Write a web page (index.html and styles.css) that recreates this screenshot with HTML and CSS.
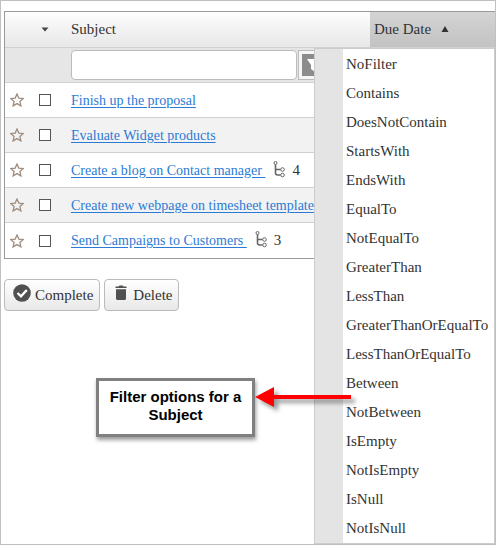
FILE: index.html
```html
<!DOCTYPE html>
<html lang="en">
<head>
    <meta charset="UTF-8">
    <meta name="viewport" content="width=device-width, initial-scale=1.0">
    <title>Tasks</title>
    <link rel="stylesheet" href="styles.css">
</head>
<body>
    <svg class="symbols" aria-hidden="true">
        <symbol id="star" viewBox="0 0 14 14">
            <path d="M7 1 L8.8 5.1 L13.2 5.500 L9.900 8.500 L10.900 12.900 L7 10.600 L3.100 12.900 L4.100 8.500 L0.800 5.500 L5.200 5.100 Z" fill="none" stroke="#a08e80" stroke-width="1.3"/>
        </symbol>
        <symbol id="tree" viewBox="0 0 12 17">
            <g fill="none" stroke="#666" stroke-width="1">
                <path d="M2.500 3.500 V12 Q2.500 14 4.500 14 H7.500 M2.500 8.500 H7.500" stroke-width="1.6"/>
                <circle cx="2.500" cy="2" r="1.500"/>
                <circle cx="9.500" cy="8.500" r="1.800"/>
                <circle cx="9.500" cy="14" r="1.800"/>
            </g>
        </symbol>
    </svg>
    <div class="page">
        <table class="grid">
            <colgroup>
                <col class="col-star">
                <col class="col-check">
                <col>
                <col class="col-due">
            </colgroup>
            <thead>
                <tr class="head">
                    <th></th>
                    <th class="center"><svg class="arrow" viewBox="0 0 8 8"><path d="M0.500 0.500 H7.500 L4 4.500 Z" fill="#444"/></svg></th>
                    <th>Subject</th>
                    <th class="due">Due Date <svg class="sort" viewBox="0 0 8 8"><path d="M4 0 L7.500 6 H0.500 Z" fill="#333"/></svg></th>
                </tr>
                <tr class="filter">
                    <td></td>
                    <td></td>
                    <td>
                        <div class="filter-box">
                            <input type="text" class="filter-input" aria-label="Filter Subject">
                            <button type="button" class="filter-btn" aria-label="Filter options">
                                <svg viewBox="0 0 22 22"><rect width="22" height="22" fill="#8c8c8c"/><path d="M5 5 H17 L13 11 V18 L9 15 V11 Z" fill="#fff"/></svg>
                            </button>
                        </div>
                    </td>
                    <td></td>
                </tr>
            </thead>
            <tbody>
                <tr>
                    <td class="center"><svg class="star"><use href="#star"/></svg></td>
                    <td class="center"><input type="checkbox" aria-label="Select Finish up the proposal"></td>
                    <td><a href="#">Finish up the proposal</a></td>
                    <td></td>
                </tr>
                <tr>
                    <td class="center"><svg class="star"><use href="#star"/></svg></td>
                    <td class="center"><input type="checkbox" aria-label="Select Evaluate Widget products"></td>
                    <td><a href="#">Evaluate Widget products</a></td>
                    <td></td>
                </tr>
                <tr>
                    <td class="center"><svg class="star"><use href="#star"/></svg></td>
                    <td class="center"><input type="checkbox" aria-label="Select Create a blog on Contact manager"></td>
                    <td><a href="#">Create a blog on Contact manager&nbsp;</a><svg class="tree"><use href="#tree"/></svg><span class="count">4</span></td>
                    <td></td>
                </tr>
                <tr>
                    <td class="center"><svg class="star"><use href="#star"/></svg></td>
                    <td class="center"><input type="checkbox" aria-label="Select Create new webpage on timesheet template"></td>
                    <td><a href="#">Create new webpage on timesheet template</a></td>
                    <td></td>
                </tr>
                <tr>
                    <td class="center"><svg class="star"><use href="#star"/></svg></td>
                    <td class="center"><input type="checkbox" aria-label="Select Send Campaigns to Customers"></td>
                    <td><a href="#">Send Campaigns to Customers&nbsp;</a><svg class="tree"><use href="#tree"/></svg><span class="count">3</span></td>
                    <td></td>
                </tr>
            </tbody>
        </table>

        <div class="actions">
            <button type="button" class="btn">
                <svg class="icon-check" viewBox="0 0 18 18"><circle cx="9" cy="9" r="8.800" fill="#505050"/><path d="M4.500 9 L8 12.300 L13.800 6" fill="none" stroke="#fff" stroke-width="2.400"/></svg>
                <span>Complete</span>
            </button>
            <button type="button" class="btn btn-delete">
                <svg class="icon-trash" viewBox="0 0 12 16"><path d="M0.500 1.500 H3.500 L4.500 0.500 H7.500 L8.500 1.500 H11.500 V3 H0.500 Z M1 4.300 H11 V13.500 Q11 15 9.500 15 H2.500 Q1 15 1 13.500 Z" fill="#505050"/></svg>
                <span>Delete</span>
            </button>
        </div>

        <ul class="menu">
            <li>NoFilter</li>
            <li>Contains</li>
            <li>DoesNotContain</li>
            <li>StartsWith</li>
            <li>EndsWith</li>
            <li>EqualTo</li>
            <li>NotEqualTo</li>
            <li>GreaterThan</li>
            <li>LessThan</li>
            <li>GreaterThanOrEqualTo</li>
            <li>LessThanOrEqualTo</li>
            <li>Between</li>
            <li>NotBetween</li>
            <li>IsEmpty</li>
            <li>NotIsEmpty</li>
            <li>IsNull</li>
            <li>NotIsNull</li>
        </ul>

        <div class="callout">
            <p class="callout-text">Filter options for a Subject</p>
            <svg class="callout-arrow" viewBox="0 0 96 20"><path d="M0 10 L19 0 V8 H96 V12 H19 V20 Z" fill="#f00"/></svg>
        </div>
    </div>
</body>
</html>
```

FILE: styles.css
```css
* {
    box-sizing: border-box;
}
body {
    margin: 0;
    font-family: "Liberation Serif", "Times New Roman", serif;
    font-size: 15px;
    color: #333;
    background-color: #fff;
}
.symbols {
    display: none;
}
.page {
    position: relative;
    min-height: 100vh;
    padding: 10px 0 0 3px;
    border: 1px solid #c0c0c0;
    overflow: hidden;
}

/* task grid */
.grid {
    width: 100%;
    table-layout: fixed;
    border-collapse: separate;
    border-spacing: 0;
    border: 1px solid #999;
    border-right: none;
}
.col-star {
    width: 23px;
}
.col-check {
    width: 34px;
}
.col-due {
    width: 125px;
}
.grid th,
.grid td {
    height: 35px;
    padding: 0 0 0 9px;
    text-align: left;
    font-weight: normal;
    white-space: nowrap;
    border-bottom: 1px solid #d0d0d0;
}
.grid th {
    height: 36px;
}
.grid .center {
    padding: 0;
    text-align: center;
}
.grid tbody tr:nth-child(even) {
    background-color: #f2f2f2;
}
.grid tbody tr:last-child td {
    border-bottom: none;
}
.head {
    background: linear-gradient(#fdfdfd, #e7e7e7);
}
.grid .due {
    padding-left: 4px;
    background: linear-gradient(#d4d4d4, #c2c2c2);
}
.filter {
    background-color: #e6e6e6;
}
.filter-box {
    display: flex;
    gap: 1px;
    padding-right: 42px;
}
.filter-input {
    flex: 1;
    min-width: 0;
    height: 30px;
    border: 1px solid #bbb;
    border-radius: 4px;
    font: inherit;
}
.filter-btn {
    width: 30px;
    height: 30px;
    padding: 3px;
    border: 1px solid #bbb;
    background-color: #f6f6f6;
}
.filter-btn svg {
    display: block;
    width: 22px;
    height: 22px;
}
.grid a {
    font-size: 14px;
    color: #2a7bd6;
    text-underline-offset: 2px;
}
.grid input[type="checkbox"] {
    appearance: none;
    display: block;
    width: 12px;
    height: 12px;
    margin: 0 auto;
    border: 1px solid #555;
    background-color: #fff;
}
.grid input[type="checkbox"]:checked {
    background-color: #555;
}
.arrow {
    width: 8px;
    height: 8px;
    vertical-align: middle;
}
.sort {
    width: 8px;
    height: 8px;
    margin-left: 6px;
}
.star {
    display: block;
    width: 14px;
    height: 14px;
    margin: 0 auto;
}
.tree {
    width: 12px;
    height: 17px;
    margin: -4px 7px 0 8px;
    vertical-align: middle;
}

/* buttons under the grid */
.actions {
    display: flex;
    gap: 4px;
    margin-top: 20px;
}
.btn {
    display: flex;
    align-items: center;
    gap: 4px;
    height: 32px;
    padding: 0 6px 0 8px;
    border: 1px solid #bbb;
    border-radius: 4px;
    background: linear-gradient(#fff, #e8e8e8);
    font: inherit;
    color: #333;
}
.btn svg {
    margin-bottom: 4px;
}
.btn-delete {
    gap: 6px;
    padding-left: 10px;
}
.icon-check {
    width: 18px;
    height: 18px;
}
.icon-trash {
    width: 12px;
    height: 16px;
}

/* filter menu */
.menu {
    position: absolute;
    top: 47px;
    right: 0;
    width: 181px;
    margin: 0;
    padding: 1px 0 0;
    list-style: none;
    border: 1px solid #ccc;
    background: linear-gradient(to right, #e4e4e4 28px, #fff 28px);
}
.menu li {
    padding-left: 31px;
    line-height: 29px;
}

/* note with arrow pointing out of the menu */
.callout {
    position: absolute;
    top: 377px;
    right: 144px;
    display: flex;
}
.callout-text {
    width: 159px;
    margin: 0;
    padding: 7px 8px 10px;
    border: 3px solid #808080;
    background-color: #fff;
    box-shadow: 1px 3px 4px rgba(0, 0, 0, 0.4);
    font: bold 15px/18px "Liberation Sans", Arial, sans-serif;
    color: #000;
    text-align: center;
}
.callout-arrow {
    width: 96px;
    height: 20px;
    margin-top: 9px;
    overflow: visible;
    filter: drop-shadow(4px 4px 2px rgba(0, 0, 0, 0.4));
}
```
